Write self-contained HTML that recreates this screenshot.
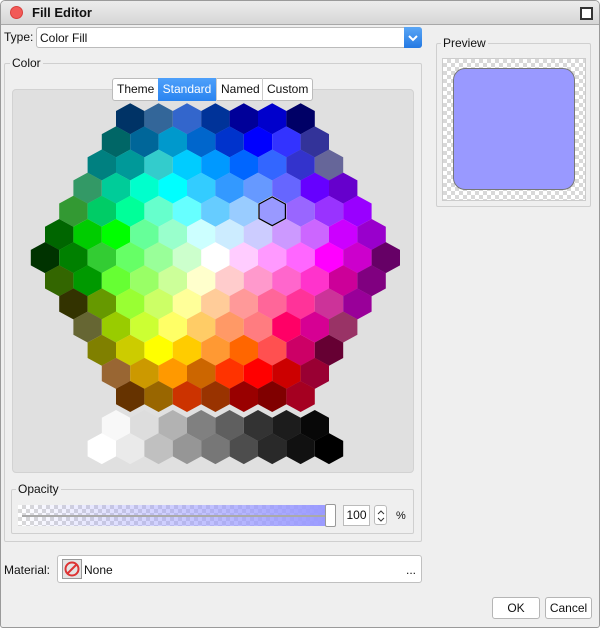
<!DOCTYPE html>
<html><head><meta charset="utf-8"><style>
*{box-sizing:border-box}
body{margin:0;width:600px;height:628px;overflow:hidden;font-family:"Liberation Sans",sans-serif;font-size:12px;color:#111;background:#fff}
.win{position:absolute;left:0;top:0;width:600px;height:628px;background:#efefef;border:1px solid #9a9a9a;border-radius:5px 5px 3px 3px;overflow:hidden}
.title{position:absolute;left:0;top:0;width:600px;height:24px;background:linear-gradient(#ececec,#d6d6d6);border-bottom:1px solid #a8a8a8}
.abs{position:absolute}
.grp{position:absolute;border:1px solid #cfcfcf;border-radius:2px}
.lbl{position:absolute;background:#efefef;padding:0 2px;font-size:12px}
.chk{background-color:#fff;background-image:linear-gradient(45deg,#d8d8d8 25%,transparent 25%,transparent 75%,#d8d8d8 75%),linear-gradient(45deg,#d8d8d8 25%,transparent 25%,transparent 75%,#d8d8d8 75%);background-size:8px 8px;background-position:0 0,4px 4px}
.btn{position:absolute;background:#fff;border:1px solid #b5b5b5;border-radius:3px;text-align:center;line-height:20px}
</style></head><body>
<div class="win">
<div class="title">
 <div class="abs" style="left:9px;top:5px;width:13px;height:13px;border-radius:50%;background:#f25a57;border:1px solid #d9403d"></div>
 <div class="abs" style="left:31px;top:4px;font-weight:bold;font-size:13px">Fill Editor</div>
 <div class="abs" style="left:579px;top:6px;width:13px;height:13px;border:2px solid #333;background:#fff"></div>
</div>
<div class="abs" style="left:3px;top:29px">Type:</div>
<div class="abs" style="left:35px;top:26px;width:386px;height:21px;background:#fff;border:1px solid #bbb;border-radius:3px"><span style="position:absolute;left:3px;top:3px">Color Fill</span>
 <div class="abs" style="right:-1px;top:-1px;width:18px;height:21px;background:linear-gradient(#5aa6f5,#2479e3);border-radius:0 3px 3px 0"><svg width="18" height="21"><path d="M5 9l4 4 4-4" stroke="#fff" stroke-width="2" fill="none"/></svg></div>
</div>
<div class="grp" style="left:3px;top:62px;width:418px;height:479px"></div>
<div class="lbl" style="left:9px;top:55px">Color</div>
<div class="abs" style="left:11px;top:88px;width:402px;height:384px;background:#e0e0e0;border:1px solid #d2d2d2;border-radius:4px"></div>
<div class="abs" style="left:111px;top:77px;width:201px;height:23px;background:#fff;border:1px solid #bbb;border-radius:3px"></div>
<div class="abs" style="left:116px;top:81px">Theme</div>
<div class="abs" style="left:157px;top:77px;width:58px;height:23px;background:linear-gradient(#4ea0fa,#2a84f0);color:#fff;text-align:center;line-height:22px">Standard</div>
<div class="abs" style="left:215px;top:77px;width:1px;height:23px;background:#ccc"></div>
<div class="abs" style="left:261px;top:77px;width:1px;height:23px;background:#ccc"></div>
<div class="abs" style="left:220px;top:81px">Named</div>
<div class="abs" style="left:266px;top:81px">Custom</div>
<svg class="abs" style="left:0;top:0" width="420" height="470">
<defs><polygon id="h" points="0,-15.5 14.2,-7.75 14.2,7.75 0,15.5 -14.2,7.75 -14.2,-7.75"/></defs>
<g transform="translate(129.2,117.7)"><use href="#h" x="0" fill="#003366"/><use href="#h" x="28.4" fill="#336699"/><use href="#h" x="56.8" fill="#3366CC"/><use href="#h" x="85.2" fill="#003399"/><use href="#h" x="113.6" fill="#000099"/><use href="#h" x="142" fill="#0000CC"/><use href="#h" x="170.4" fill="#000066"/></g>
<g transform="translate(115,140.85)"><use href="#h" x="0" fill="#006666"/><use href="#h" x="28.4" fill="#006699"/><use href="#h" x="56.8" fill="#0099CC"/><use href="#h" x="85.2" fill="#0066CC"/><use href="#h" x="113.6" fill="#0033CC"/><use href="#h" x="142" fill="#0000FF"/><use href="#h" x="170.4" fill="#3333FF"/><use href="#h" x="198.8" fill="#333399"/></g>
<g transform="translate(100.8,164)"><use href="#h" x="0" fill="#008080"/><use href="#h" x="28.4" fill="#009999"/><use href="#h" x="56.8" fill="#33CCCC"/><use href="#h" x="85.2" fill="#00CCFF"/><use href="#h" x="113.6" fill="#0099FF"/><use href="#h" x="142" fill="#0066FF"/><use href="#h" x="170.4" fill="#3366FF"/><use href="#h" x="198.8" fill="#3333CC"/><use href="#h" x="227.2" fill="#666699"/></g>
<g transform="translate(86.6,187.15)"><use href="#h" x="0" fill="#339966"/><use href="#h" x="28.4" fill="#00CC99"/><use href="#h" x="56.8" fill="#00FFCC"/><use href="#h" x="85.2" fill="#00FFFF"/><use href="#h" x="113.6" fill="#33CCFF"/><use href="#h" x="142" fill="#3399FF"/><use href="#h" x="170.4" fill="#6699FF"/><use href="#h" x="198.8" fill="#6666FF"/><use href="#h" x="227.2" fill="#6600FF"/><use href="#h" x="255.6" fill="#6600CC"/></g>
<g transform="translate(72.4,210.3)"><use href="#h" x="0" fill="#339933"/><use href="#h" x="28.4" fill="#00CC66"/><use href="#h" x="56.8" fill="#00FF99"/><use href="#h" x="85.2" fill="#66FFCC"/><use href="#h" x="113.6" fill="#66FFFF"/><use href="#h" x="142" fill="#66CCFF"/><use href="#h" x="170.4" fill="#99CCFF"/><use href="#h" x="198.8" fill="#e0e0e0"/><use href="#h" x="227.2" fill="#9966FF"/><use href="#h" x="255.6" fill="#9933FF"/><use href="#h" x="284" fill="#9900FF"/></g>
<g transform="translate(58.2,233.45)"><use href="#h" x="0" fill="#006600"/><use href="#h" x="28.4" fill="#00CC00"/><use href="#h" x="56.8" fill="#00FF00"/><use href="#h" x="85.2" fill="#66FF99"/><use href="#h" x="113.6" fill="#99FFCC"/><use href="#h" x="142" fill="#CCFFFF"/><use href="#h" x="170.4" fill="#CCECFF"/><use href="#h" x="198.8" fill="#CCCCFF"/><use href="#h" x="227.2" fill="#CC99FF"/><use href="#h" x="255.6" fill="#CC66FF"/><use href="#h" x="284" fill="#CC00FF"/><use href="#h" x="312.4" fill="#9900CC"/></g>
<g transform="translate(44,256.6)"><use href="#h" x="0" fill="#003300"/><use href="#h" x="28.4" fill="#008000"/><use href="#h" x="56.8" fill="#33CC33"/><use href="#h" x="85.2" fill="#66FF66"/><use href="#h" x="113.6" fill="#99FF99"/><use href="#h" x="142" fill="#CCFFCC"/><use href="#h" x="170.4" fill="#FFFFFF"/><use href="#h" x="198.8" fill="#FFCCFF"/><use href="#h" x="227.2" fill="#FF99FF"/><use href="#h" x="255.6" fill="#FF66FF"/><use href="#h" x="284" fill="#FF00FF"/><use href="#h" x="312.4" fill="#CC00CC"/><use href="#h" x="340.8" fill="#660066"/></g>
<g transform="translate(58.2,279.75)"><use href="#h" x="0" fill="#336600"/><use href="#h" x="28.4" fill="#009900"/><use href="#h" x="56.8" fill="#66FF33"/><use href="#h" x="85.2" fill="#99FF66"/><use href="#h" x="113.6" fill="#CCFF99"/><use href="#h" x="142" fill="#FFFFCC"/><use href="#h" x="170.4" fill="#FFCCCC"/><use href="#h" x="198.8" fill="#FF99CC"/><use href="#h" x="227.2" fill="#FF66CC"/><use href="#h" x="255.6" fill="#FF33CC"/><use href="#h" x="284" fill="#CC0099"/><use href="#h" x="312.4" fill="#800080"/></g>
<g transform="translate(72.4,302.9)"><use href="#h" x="0" fill="#333300"/><use href="#h" x="28.4" fill="#669900"/><use href="#h" x="56.8" fill="#99FF33"/><use href="#h" x="85.2" fill="#CCFF66"/><use href="#h" x="113.6" fill="#FFFF99"/><use href="#h" x="142" fill="#FFCC99"/><use href="#h" x="170.4" fill="#FF9999"/><use href="#h" x="198.8" fill="#FF6699"/><use href="#h" x="227.2" fill="#FF3399"/><use href="#h" x="255.6" fill="#CC3399"/><use href="#h" x="284" fill="#990099"/></g>
<g transform="translate(86.6,326.05)"><use href="#h" x="0" fill="#666633"/><use href="#h" x="28.4" fill="#99CC00"/><use href="#h" x="56.8" fill="#CCFF33"/><use href="#h" x="85.2" fill="#FFFF66"/><use href="#h" x="113.6" fill="#FFCC66"/><use href="#h" x="142" fill="#FF9966"/><use href="#h" x="170.4" fill="#FF7C80"/><use href="#h" x="198.8" fill="#FF0066"/><use href="#h" x="227.2" fill="#D60093"/><use href="#h" x="255.6" fill="#993366"/></g>
<g transform="translate(100.8,349.2)"><use href="#h" x="0" fill="#808000"/><use href="#h" x="28.4" fill="#CCCC00"/><use href="#h" x="56.8" fill="#FFFF00"/><use href="#h" x="85.2" fill="#FFCC00"/><use href="#h" x="113.6" fill="#FF9933"/><use href="#h" x="142" fill="#FF6600"/><use href="#h" x="170.4" fill="#FF5050"/><use href="#h" x="198.8" fill="#CC0066"/><use href="#h" x="227.2" fill="#660033"/></g>
<g transform="translate(115,372.35)"><use href="#h" x="0" fill="#996633"/><use href="#h" x="28.4" fill="#CC9900"/><use href="#h" x="56.8" fill="#FF9900"/><use href="#h" x="85.2" fill="#CC6600"/><use href="#h" x="113.6" fill="#FF3300"/><use href="#h" x="142" fill="#FF0000"/><use href="#h" x="170.4" fill="#CC0000"/><use href="#h" x="198.8" fill="#990033"/></g>
<g transform="translate(129.2,395.5)"><use href="#h" x="0" fill="#663300"/><use href="#h" x="28.4" fill="#996600"/><use href="#h" x="56.8" fill="#CC3300"/><use href="#h" x="85.2" fill="#993300"/><use href="#h" x="113.6" fill="#990000"/><use href="#h" x="142" fill="#800000"/><use href="#h" x="170.4" fill="#A50021"/></g>
<g transform="translate(115,424.5)"><use href="#h" x="0" fill="#F8F8F8"/><use href="#h" x="28.4" fill="#DDDDDD"/><use href="#h" x="56.8" fill="#B2B2B2"/><use href="#h" x="85.2" fill="#808080"/><use href="#h" x="113.6" fill="#5F5F5F"/><use href="#h" x="142" fill="#333333"/><use href="#h" x="170.4" fill="#1C1C1C"/><use href="#h" x="198.8" fill="#080808"/></g>
<g transform="translate(100.8,447.6)"><use href="#h" x="0" fill="#FFFFFF"/><use href="#h" x="28.4" fill="#EAEAEA"/><use href="#h" x="56.8" fill="#C0C0C0"/><use href="#h" x="85.2" fill="#969696"/><use href="#h" x="113.6" fill="#777777"/><use href="#h" x="142" fill="#4D4D4D"/><use href="#h" x="170.4" fill="#292929"/><use href="#h" x="198.8" fill="#111111"/><use href="#h" x="227.2" fill="#000000"/></g>
<g transform="translate(271.2,210.3) scale(0.93)"><use href="#h" fill="#9999FF" stroke="#000" stroke-width="1.3"/></g>
</svg>
<div class="grp" style="left:10px;top:488px;width:403px;height:45px"></div>
<div class="lbl" style="left:15px;top:481px">Opacity</div>
<div class="abs chk" style="left:17px;top:504px;width:313px;height:21px"></div>
<div class="abs" style="left:17px;top:504px;width:313px;height:21px;background:linear-gradient(90deg,rgba(153,153,255,0),rgba(153,153,255,1))"></div>
<div class="abs" style="left:21px;top:514px;width:303px;height:2px;background:#aaa"></div>
<div class="abs" style="left:324px;top:503px;width:11px;height:23px;background:#fff;border:1px solid #999;border-radius:2px"></div>
<div class="abs" style="left:342px;top:504px;width:27px;height:21px;background:#fff;border:1px solid #bbb;text-align:center;line-height:19px">100</div>
<div class="abs" style="left:373px;top:504px;width:13px;height:20px;background:#fff;border:1px solid #bbb;border-radius:3px"><svg width="13" height="20"><path d="M3 8l3-3 3 3M3 12l3 3 3-3" stroke="#333" fill="none"/></svg></div>
<div class="abs" style="left:395px;top:509px;font-size:11px">%</div>
<div class="grp" style="left:435px;top:42px;width:155px;height:164px"></div>
<div class="lbl" style="left:440px;top:35px">Preview</div>
<div class="abs chk" style="left:441px;top:57px;width:144px;height:143px;border:1px solid #ccc"></div>
<div class="abs" style="left:452px;top:67px;width:122px;height:122px;background:#9999FF;border:1px solid #777;border-radius:12px"></div>
<div class="abs" style="left:3px;top:562px">Material:</div>
<div class="abs" style="left:56px;top:554px;width:365px;height:28px;background:#fff;border:1px solid #c0c0c0;border-radius:3px"></div>
<div class="abs" style="left:61px;top:558px;width:20px;height:20px;background:#e4e4e4;border:1px solid #999"><svg width="18" height="18"><circle cx="9" cy="9" r="6.5" stroke="#d33" stroke-width="2" fill="none"/><path d="M4.5 13.5L13.5 4.5" stroke="#d33" stroke-width="2"/></svg></div>
<div class="abs" style="left:83px;top:562px">None</div>
<div class="abs" style="left:405px;top:562px">...</div>
<div class="btn" style="left:491px;top:596px;width:48px;height:22px">OK</div>
<div class="btn" style="left:544px;top:596px;width:47px;height:22px">Cancel</div>
</div>
</body></html>
